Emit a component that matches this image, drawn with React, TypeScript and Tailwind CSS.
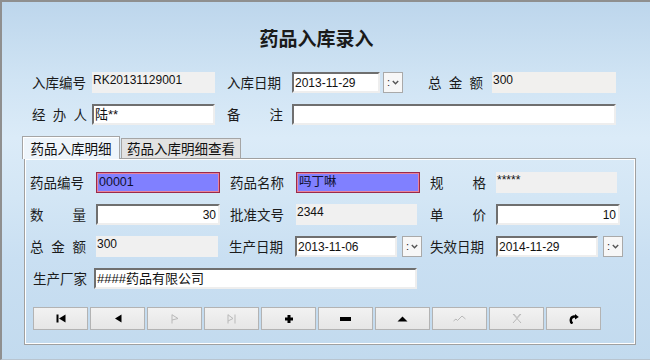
import React from "react";

const CJK = { fontFamily: '"Noto Sans CJK SC", "Noto Sans", sans-serif' };
const LAT = { fontFamily: '"Liberation Sans", "Noto Sans CJK SC", sans-serif' };

function Lbl({ t, w = 56, spread = false, cls = "" }: { t: string; w?: number; spread?: boolean; cls?: string }) {
  const chars = t.split("");
  return (
    <div
      className={`flex h-[21px] items-center text-[13.5px] text-[#1b1b1b] shrink-0 ${spread ? "justify-between" : ""} ${cls}`}
      style={{ ...CJK, width: w }}
    >
      {spread ? chars.map((c, i) => <span key={i}>{c}</span>) : t}
    </div>
  );
}

function RO({ v, w, cls = "" }: { v: string; w: number; cls?: string }) {
  return (
    <div
      className={`h-[21px] shrink-0 bg-[#f0f0f0] pl-[1px] pt-[1px] text-[12px] leading-[15px] text-[#111] ${cls}`}
      style={{ ...LAT, width: w }}
    >
      {v}
    </div>
  );
}

function Inp({ v = "", w, right = false, cls = "" }: { v?: string; w: number; right?: boolean; cls?: string }) {
  return (
    <div
      className={`flex h-[21px] shrink-0 items-center border-2 border-t-[#6f6f6f] border-l-[#6f6f6f] border-r-[#eeeeee] border-b-[#eeeeee] bg-white px-[1px] text-[12px] text-[#111] ${right ? "justify-end pr-[2px]" : ""} ${cls}`}
      style={{ ...LAT, width: w }}
    >
      {v}
    </div>
  );
}

function Blue({ v, w }: { v: string; w: number }) {
  return (
    <div
      className="flex h-[21px] shrink-0 items-center border border-[#9a2a4a] bg-[#8080ff] px-[2px] text-[12.5px] text-[#101030] shadow-[inset_0_0_0_1px_#e8849c]"
      style={{ ...LAT, width: w }}
    >
      {v}
    </div>
  );
}

function Drop({ cls = "" }: { cls?: string }) {
  return (
    <div
      className={`flex h-[21px] w-[20px] shrink-0 items-center justify-center gap-[2px] border border-[#a9a9a9] bg-[#f7f7f7] text-[11px] text-[#222] ${cls}`}
      style={LAT}
    >
      <span className="leading-none">:</span>
      <svg width="7" height="5" viewBox="0 0 7 5">
        <path d="M0.8 1 L3.5 3.8 L6.2 1" fill="none" stroke="#555" strokeWidth="1.4" />
      </svg>
    </div>
  );
}

const G = "#b9b9b9";

const icons: React.ReactNode[] = [
  <svg width="10" height="9" viewBox="0 0 10 9"><rect x="0.5" y="0.5" width="2" height="8" fill="#000" /><polygon points="9.5,0.5 9.5,8.5 3,4.5" fill="#000" /></svg>,
  <svg width="8" height="9" viewBox="0 0 8 9"><polygon points="7.5,0.5 7.5,8.5 1,4.5" fill="#000" /></svg>,
  <svg width="8" height="10" viewBox="0 0 8 10"><path d="M1 0.5 V9.5 M1 0.8 L7 4.5 L1 6" fill="none" stroke={G} strokeWidth="1" /></svg>,
  <svg width="10" height="10" viewBox="0 0 10 10"><path d="M1 0.5 V9.5 M1 0.8 L6 4.5 L1 7 M8 0.5 V9.5" fill="none" stroke={G} strokeWidth="1" /></svg>,
  <svg width="10" height="10" viewBox="0 0 10 10"><path d="M5 1 V9 M1 5 H9" stroke="#000" strokeWidth="3" /></svg>,
  <svg width="11" height="4" viewBox="0 0 11 4"><rect x="0" y="0" width="11" height="4" fill="#000" /></svg>,
  <svg width="11" height="6" viewBox="0 0 11 6"><polygon points="0.5,5.5 10.5,5.5 5.5,0.5" fill="#000" /></svg>,
  <svg width="13" height="8" viewBox="0 0 13 8"><path d="M0.5 6 L3 4 L4.5 5.5 L9 1 L12.5 4" fill="none" stroke={G} strokeWidth="1" /></svg>,
  <svg width="10" height="11" viewBox="0 0 10 11"><path d="M1 1 L9 10 M9 1 L1 10" fill="none" stroke={G} strokeWidth="1" /><path d="M2 1 L5 4.5 L8 1" fill="none" stroke={G} strokeWidth="0.8" /></svg>,
  <svg width="10" height="10" viewBox="0 0 10 10"><path d="M3.5 9.5 C1 8 1 3 5 2.5 L7 2.6" fill="none" stroke="#000" strokeWidth="2.4" /><polygon points="6,0 9.8,3 6,5.5" fill="#000" /></svg>,
];

export default function App() {
  return (
    <div
      className="flex h-[360px] w-[650px] flex-col overflow-hidden border-l-2 border-t-2 border-b border-l-[#8f8f8f] border-t-[#8f8f8f] border-b-[#b8c4cf]"
      style={{
        background:
          "linear-gradient(180deg, #bdd6ec 0%, #d0e4f4 22%, #dbebf8 38%, #d3e6f5 55%, #c9dff2 72%, #c2daee 100%)",
      }}
    >
      {/* title */}
      <div className="mt-[24px] h-[24px] w-[629px] text-center text-[19px] font-bold leading-[24px] text-[#1a1a1a]" style={CJK}>
        药品入库录入
      </div>

      {/* row 1 */}
      <div className="mt-[22px] flex items-center pl-[30px]">
        <Lbl t="入库编号" w={60} />
        <RO v="RK20131129001" w={123} />
        <Lbl t="入库日期" w={65} cls="ml-[12px]" />
        <Inp v="2013-11-29" w={88} />
        <Drop cls="ml-[3px]" />
        <Lbl t="总金额" w={55} spread cls="ml-[25px]" />
        <RO v="300" w={124} cls="ml-[9px] bg-[#f1f0ee]" />
      </div>

      {/* row 2 */}
      <div className="mt-[11px] flex items-center pl-[30px]">
        <div className="flex w-[60px] shrink-0">
          <Lbl t="经办人" w={55} spread />
        </div>
        <Inp v="陆**" w={123} cls="text-[13px]" />
        <div className="ml-[12px] flex w-[65px] shrink-0">
          <Lbl t="备注" w={56} spread />
        </div>
        <Inp w={324} />
      </div>

      {/* tabs */}
      <div className="relative z-10 ml-[20px] mt-[11px] flex h-[23px] items-end">
        <div
          className="flex h-[23px] w-[98px] items-center justify-center border border-b-0 border-[#a5a5a5] bg-[#eef5fb] text-[13.5px] text-[#111] shadow-[inset_1px_1px_0_#ffffff]"
          style={CJK}
        >
          药品入库明细
        </div>
        <div
          className="ml-[1px] mb-[1px] flex h-[20px] w-[120px] items-center justify-center border border-b-0 border-[#a5a5a5] bg-[#e2e2e2] text-[13.5px] text-[#111]"
          style={CJK}
        >
          药品入库明细查看
        </div>
      </div>

      {/* panel */}
      <div className="-mt-[1px] ml-[22px] h-[187px] w-[612px] border border-[#a0a0a0] shadow-[inset_1px_1px_0_#ffffff,inset_-1px_-1px_0_#ffffff] pl-[5px] pt-[13px]">
        <div className="flex items-center">
          <Lbl t="药品编号" w={66} />
          <Blue v="00001" w={124} />
          <Lbl t="药品名称" w={66} cls="ml-[10px]" />
          <Blue v="吗丁啉" w={124} />
          <Lbl t="规格" w={56} spread cls="ml-[10px]" />
          <RO v="*****" w={121} cls="ml-[10px]" />
        </div>
        <div className="mt-[11px] flex items-center">
          <div className="flex w-[66px] shrink-0"><Lbl t="数量" w={56} spread /></div>
          <Inp v="30" w={124} right />
          <Lbl t="批准文号" w={66} cls="ml-[10px]" />
          <RO v="2344" w={121} />
          <Lbl t="单价" w={56} spread cls="ml-[13px]" />
          <Inp v="10" w={124} right cls="ml-[10px]" />
        </div>
        <div className="mt-[11px] flex items-center">
          <div className="flex w-[66px] shrink-0"><Lbl t="总金额" w={56} spread /></div>
          <RO v="300" w={122} />
          <Lbl t="生产日期" w={66} cls="ml-[11px]" />
          <Inp v="2013-11-06" w={102} />
          <Drop cls="ml-[5px]" />
          <Lbl t="失效日期" w={66} cls="ml-[8px]" />
          <Inp v="2014-11-29" w={102} />
          <Drop cls="ml-[5px]" />
        </div>
        <div className="mt-[11px] flex items-center pl-[3px]">
          <Lbl t="生产厂家" w={61} />
          <Inp v="####药品有限公司" w={323} cls="text-[13px]" />
        </div>
        <div className="ml-[3px] mt-[18px] flex gap-[2px]">
          {icons.map((ic, i) => (
            <div
              key={i}
              className="flex h-[23px] w-[55px] items-center justify-center border border-[#b3b3b3] bg-[linear-gradient(180deg,#f2f2f2,#e6e6e6)]"
            >
              {ic}
            </div>
          ))}
        </div>
      </div>
    </div>
  );
}
